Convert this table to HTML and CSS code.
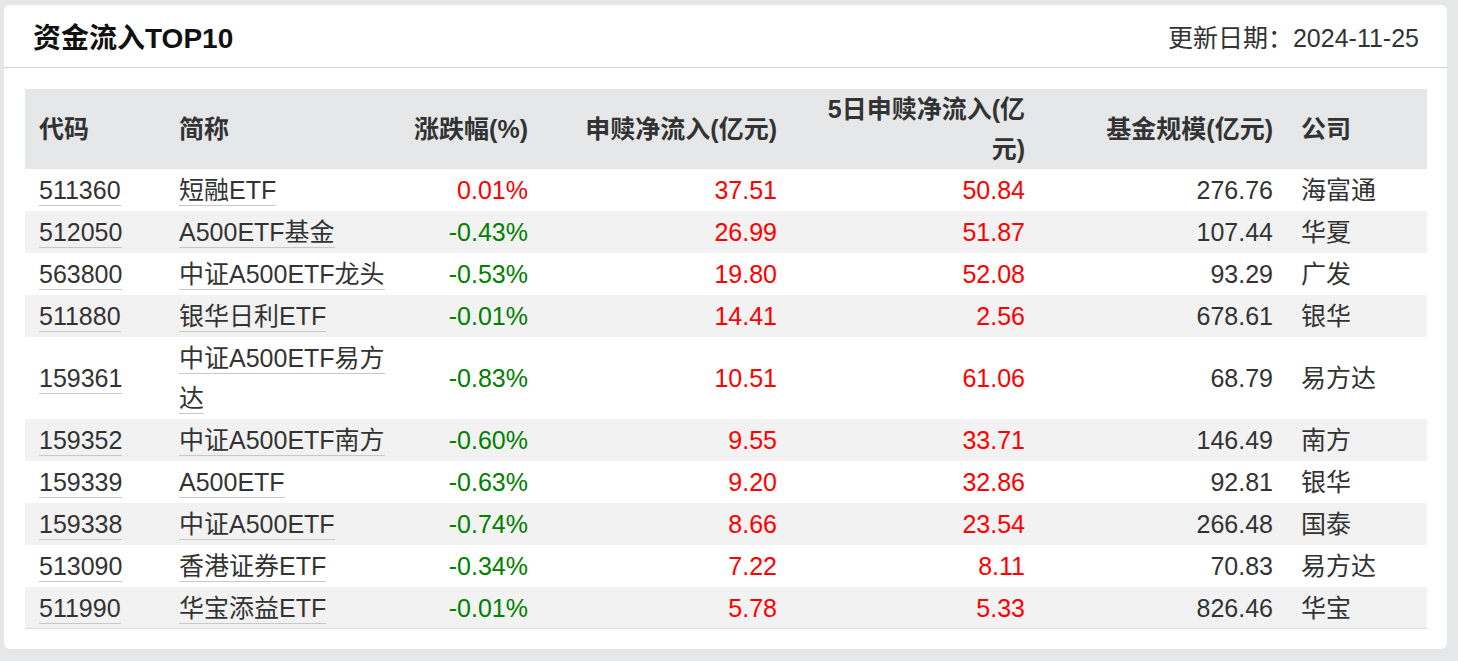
FILE: index.html
```html
<!DOCTYPE html>
<html lang="zh-CN">
<head>
<meta charset="utf-8">
<title>资金流入TOP10</title>
<link rel="stylesheet" href="styles.css">
</head>
<body>
<div class="card">
  <div class="card-head">
    <h2 class="title">资金流入TOP10</h2>
    <div class="date">更新日期：2024-11-25</div>
  </div>
  <div class="card-body">
    <table class="grid">
      <colgroup>
        <col class="c1"><col class="c2"><col class="c3"><col class="c4"><col class="c5"><col class="c6"><col class="c7">
      </colgroup>
      <thead>
        <tr>
          <th class="l">代码</th>
          <th class="l">简称</th>
          <th class="r nw">涨跌幅(%)</th>
          <th class="r">申赎净流入(亿元)</th>
          <th class="r">5日申赎净流入(亿元)</th>
          <th class="r">基金规模(亿元)</th>
          <th class="l">公司</th>
        </tr>
      </thead>
      <tbody>
        <tr><td><a class="lnk">511360</a></td><td><a class="lnk">短融ETF</a></td><td class="r up">0.01%</td><td class="r up">37.51</td><td class="r up">50.84</td><td class="r">276.76</td><td>海富通</td></tr>
        <tr><td><a class="lnk">512050</a></td><td><a class="lnk">A500ETF基金</a></td><td class="r down">-0.43%</td><td class="r up">26.99</td><td class="r up">51.87</td><td class="r">107.44</td><td>华夏</td></tr>
        <tr><td><a class="lnk">563800</a></td><td><a class="lnk">中证A500ETF龙头</a></td><td class="r down">-0.53%</td><td class="r up">19.80</td><td class="r up">52.08</td><td class="r">93.29</td><td>广发</td></tr>
        <tr><td><a class="lnk">511880</a></td><td><a class="lnk">银华日利ETF</a></td><td class="r down">-0.01%</td><td class="r up">14.41</td><td class="r up">2.56</td><td class="r">678.61</td><td>银华</td></tr>
        <tr><td><a class="lnk">159361</a></td><td><a class="lnk">中证A500ETF易方达</a></td><td class="r down">-0.83%</td><td class="r up">10.51</td><td class="r up">61.06</td><td class="r">68.79</td><td>易方达</td></tr>
        <tr><td><a class="lnk">159352</a></td><td><a class="lnk">中证A500ETF南方</a></td><td class="r down">-0.60%</td><td class="r up">9.55</td><td class="r up">33.71</td><td class="r">146.49</td><td>南方</td></tr>
        <tr><td><a class="lnk">159339</a></td><td><a class="lnk">A500ETF</a></td><td class="r down">-0.63%</td><td class="r up">9.20</td><td class="r up">32.86</td><td class="r">92.81</td><td>银华</td></tr>
        <tr><td><a class="lnk">159338</a></td><td><a class="lnk">中证A500ETF</a></td><td class="r down">-0.74%</td><td class="r up">8.66</td><td class="r up">23.54</td><td class="r">266.48</td><td>国泰</td></tr>
        <tr><td><a class="lnk">513090</a></td><td><a class="lnk">香港证券ETF</a></td><td class="r down">-0.34%</td><td class="r up">7.22</td><td class="r up">8.11</td><td class="r">70.83</td><td>易方达</td></tr>
        <tr><td><a class="lnk">511990</a></td><td><a class="lnk">华宝添益ETF</a></td><td class="r down">-0.01%</td><td class="r up">5.78</td><td class="r up">5.33</td><td class="r">826.46</td><td>华宝</td></tr>
      </tbody>
    </table>
  </div>
</div>
</body>
</html>
```

FILE: styles.css
```css
html, body {
  margin: 0;
  padding: 0;
}
body {
  background: #e6e7e9;
  padding: 5px 11px 12px 4px;
  font-family: "Liberation Sans", Arial, "Noto Sans CJK SC", sans-serif;
  color: #333;
}
.card {
  background: #fff;
  border-radius: 6px;
  overflow: hidden;
}
.card-head {
  height: 62px;
  border-bottom: 1px solid #d0d0d0;
  display: flex;
  align-items: center;
  justify-content: space-between;
  padding: 0 28px 0 29px;
}
.title {
  margin: 0;
  font-size: 28px;
  font-weight: bold;
  color: #111;
}
.date {
  font-size: 25px;
  color: #333;
}
.card-body {
  padding: 21px 20px 20px 21px;
}
.grid {
  width: 100%;
  border-collapse: collapse;
  table-layout: fixed;
  font-size: 25px;
}
.c1 { width: 140px; }
.c2 { width: 236px; }
.c3 { width: 141px; }
.c4 { width: 249px; }
.c5 { width: 248px; }
.c6 { width: 248px; }
.c7 { width: 140px; }
.grid th {
  background: #e6e7e9;
  font-weight: bold;
  color: #333;
  line-height: 40px;
  height: 80px;
  padding: 0 14px;
  vertical-align: middle;
}
.grid th.nw {
  white-space: nowrap;
  padding-left: 0;
}
.grid td {
  line-height: 40px;
  padding: 1px 14px;
  vertical-align: middle;
  text-align: left;
}
.grid tbody tr:nth-child(even) td {
  background: #f1f2f1;
}
.grid tbody tr:last-child td {
  border-bottom: 1px solid #dcdcdc;
  padding-bottom: 0;
}
.grid .l { text-align: left; }
.grid .r { text-align: right; }
.up { color: #ff0000; }
.down { color: #008000; }
.lnk {
  color: #333;
  text-decoration: none;
  border-bottom: 1px solid #c8c8c8;
  padding-bottom: 1px;
}
```
